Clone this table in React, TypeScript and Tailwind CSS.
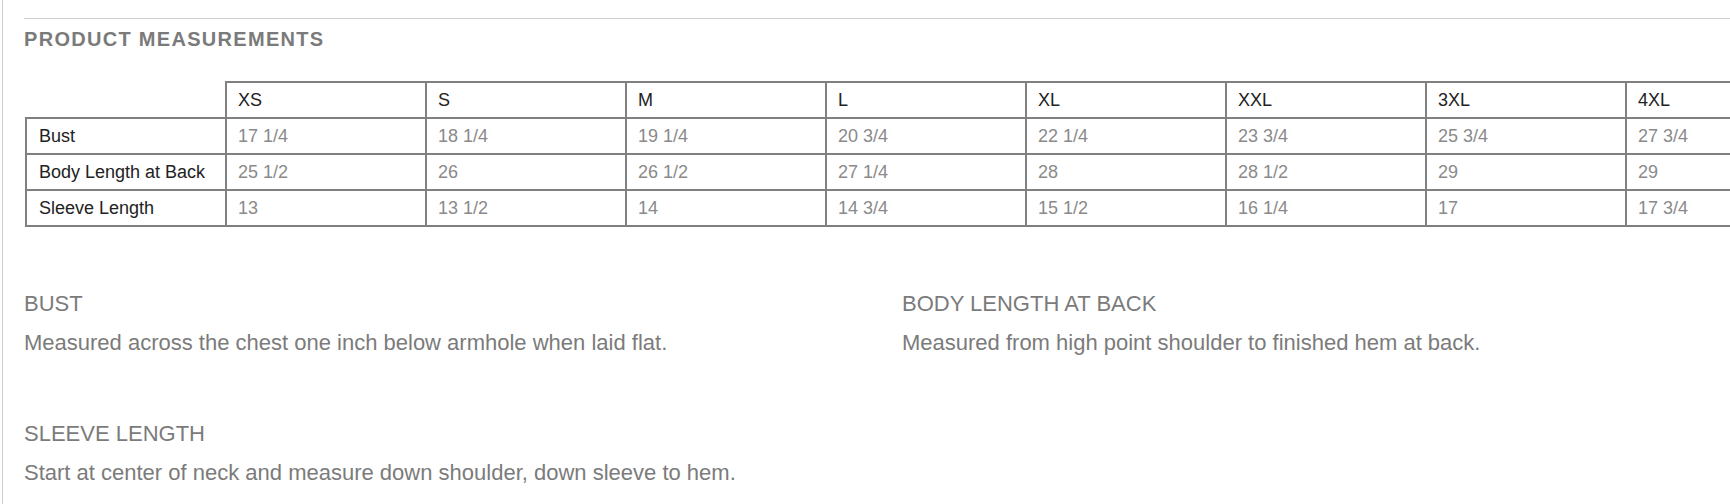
const sizes = ['XS', 'S', 'M', 'L', 'XL', 'XXL', '3XL', '4XL']

const rows = [
  { label: 'Bust', values: ['17 1/4', '18 1/4', '19 1/4', '20 3/4', '22 1/4', '23 3/4', '25 3/4', '27 3/4'] },
  { label: 'Body Length at Back', values: ['25 1/2', '26', '26 1/2', '27 1/4', '28', '28 1/2', '29', '29'] },
  { label: 'Sleeve Length', values: ['13', '13 1/2', '14', '14 3/4', '15 1/2', '16 1/4', '17', '17 3/4'] },
]

const notes = [
  { title: 'BUST', text: 'Measured across the chest one inch below armhole when laid flat.' },
  { title: 'BODY LENGTH AT BACK', text: 'Measured from high point shoulder to finished hem at back.' },
  { title: 'SLEEVE LENGTH', text: 'Start at center of neck and measure down shoulder, down sleeve to hem.' },
]

function MeasurementTable() {
  return (
    <table className="mt-[30px] ml-px w-[1802px] table-fixed border-separate border-spacing-0 text-[18px] leading-[20px]">
      <colgroup>
        <col className="w-[202px]" />
        {sizes.map((s) => (
          <col key={s} className="w-[200px]" />
        ))}
      </colgroup>
      <thead>
        <tr>
          {/* empty corner cell, no top/left border */}
          <th className="border-r-2 border-b-2 border-[#808080] py-[7px]" />
          {sizes.map((s) => (
            <th
              key={s}
              className="border-t-2 border-r-2 border-b-2 border-[#808080] py-[7px] pl-[11px] text-left font-normal text-[#222]"
            >
              {s}
            </th>
          ))}
        </tr>
      </thead>
      <tbody>
        {rows.map((row) => (
          <tr key={row.label}>
            <td className="border-l-2 border-r-2 border-b-2 border-[#808080] py-[7px] pl-[12px] text-[#222] whitespace-nowrap">
              {row.label}
            </td>
            {row.values.map((v, i) => (
              <td key={i} className="border-r-2 border-b-2 border-[#808080] py-[7px] pl-[11px] text-[#8a8a8a]">
                {v}
              </td>
            ))}
          </tr>
        ))}
      </tbody>
    </table>
  )
}

export default function App() {
  return (
    <div className="w-full h-[504px] overflow-hidden bg-white font-['Liberation_Sans',Arial,sans-serif]">
      <div className="ml-[2px] h-full border-l border-[#cfcfcf] pl-[21px] pt-[18px]">
        <div className="h-px bg-[#cfcfcf]" />

        <h2 className="mt-[8px] text-[20px] leading-[24px] font-bold tracking-[1.3px] text-[#7a7a7a]">
          PRODUCT MEASUREMENTS
        </h2>

        <MeasurementTable />

        {/* Measurement notes */}
        <div className="mt-[64px] grid grid-cols-[878px_1fr] gap-y-[65px] text-[22px] leading-[26px] text-[#7b7b7b]">
          {notes.map((n) => (
            <div key={n.title}>
              <div>{n.title}</div>
              <p className="mt-[13px] whitespace-nowrap">{n.text}</p>
            </div>
          ))}
        </div>
      </div>
    </div>
  )
}
